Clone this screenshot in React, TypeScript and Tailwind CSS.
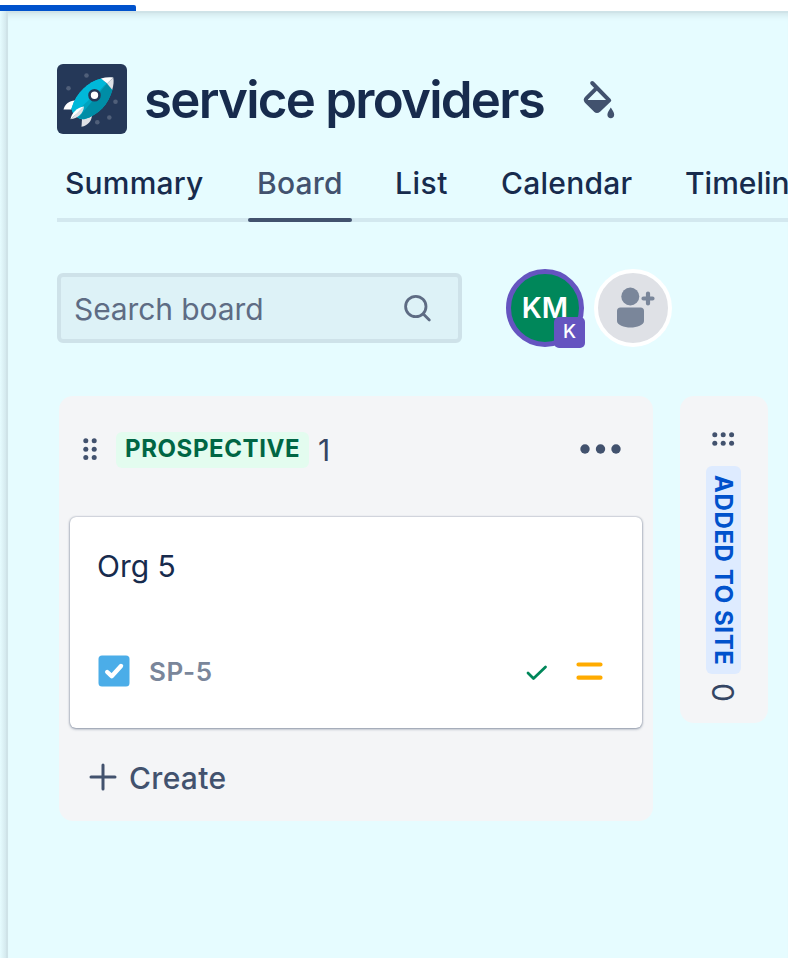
import React from "react";

function Rocket() {
  return (
    <svg viewBox="0 0 70 70" className="h-[70px] w-[70px] shrink-0">
      <rect width="70" height="70" rx="6" fill="#253858" />
      <g fill="#505F79">
        <circle cx="29.500" cy="11.500" r="2.300" />
        <circle cx="11.500" cy="24.300" r="2.300" />
        <circle cx="58.500" cy="37.700" r="2.300" />
        <circle cx="52.300" cy="53.500" r="2.300" />
        <circle cx="40.300" cy="58.200" r="2.300" />
      </g>
      <path d="M6.500 45.600C8 39.500 13 36 19 36.500L14.500 45.500Z" fill="#fff" />
      <path d="M25 54.500L35 51.500C34.500 57 31 61.500 24.500 62.800Z" fill="#DFE1E6" />
      <path d="M44.500 14.500C31 18 19.500 28 14.500 44.500C15.500 50.500 19 54 25 55.200L36 34Z" fill="#00B8D9" />
      <path d="M55.500 25.500C51.500 40 42 51 27 55.300C22 55.500 17.500 52 15.500 47.500L50 19.500Z" fill="#00A3BF" />
      <path d="M55.500 25.500C51.500 40 42 51 27 55.300L21.500 53.800L50 19.500Z" fill="#008DA6" />
      <path d="M44.500 14.500C31 18 19.500 28 14.500 44.500L16.500 50L50 19.500Z" fill="#00B8D9" />
      <path d="M56.300 13.500C52 13 48 13.300 44 14.500L50.200 19.600Z" fill="#fff" />
      <path d="M56.300 13.500C57 17.500 56.500 21.500 55.200 25.800L50 19.500Z" fill="#DFE1E6" />
      <path d="M27 42.500C20 43.500 14.500 49 13.500 55.300L20.300 49.300Z" fill="#fff" />
      <path d="M27 42.500C26.500 49.500 20.500 54.500 13.500 55.300L20.300 49Z" fill="#DFE1E6" />
      <circle cx="37.500" cy="31.300" r="5" fill="#fff" stroke="#253858" strokeWidth="2.600" />
    </svg>
  );
}

function PaintBucket() {
  return (
    <svg viewBox="0 0 36 44" className="mt-[4px] h-[44px] w-[36px] shrink-0">
      <path d="M12.200 4L29.200 21.300L18.700 31.200Q17 32.700 15.300 31.200L6.600 22.600Q5 20.800 6.600 19.200L16.600 9.200" fill="none" stroke="#42526E" strokeWidth="4" strokeLinecap="round" strokeLinejoin="round" />
      <path d="M6 21H28.500L18.700 31.800Q17 33 15.300 31.800Z" fill="#42526E" />
      <path d="M30.800 28.500C32.500 31.200 34.200 33.500 34.200 35.700C34.200 37.900 32.700 39.300 30.800 39.300S27.400 37.900 27.400 35.700C27.400 33.500 29.200 31.200 30.800 28.500Z" fill="#42526E" />
    </svg>
  );
}

function Grip({ vertical }: { vertical?: boolean }) {
  const cols = vertical ? [0, 1] : [0, 1, 2];
  const rows = vertical ? [0, 1, 2] : [0, 1];
  return (
    <svg viewBox={vertical ? "0 0 14 24" : "0 0 24 14"} className={vertical ? "h-[24px] w-[14px]" : "h-[14px] w-[24px]"}>
      {cols.map((c) => rows.map((r) => (
        <circle key={`${c}-${r}`} cx={2.8 + c * 8.4} cy={2.8 + r * 8.4} r="2.500" fill="#42526E" />
      )))}
    </svg>
  );
}

function Header() {
  return (
    <div className="flex h-[70px] items-center">
      <Rocket />
      <h1 className="mt-[2px] ml-[17px] w-[436px] text-[51px] leading-[72px] font-semibold tracking-[-1.750px] whitespace-nowrap text-[#172B4D]">service providers</h1>
      <PaintBucket />
    </div>
  );
}

function Tabs() {
  return (
    <nav className="mt-[14px] flex h-[74px] w-[900px] text-[30px] leading-[70px] font-medium whitespace-nowrap text-[#172B4D] shadow-[inset_0_-4px_0_#d3e8ef]">
      <span className="w-[191px] pl-[8px] tracking-[0.200px]">Summary</span>
      <span className="h-[74px] w-[104px] pl-[9px] tracking-[0.200px] text-[#42526E]">
        Board
        <i className="block h-[4px] w-[104px] -ml-[9px] rounded-[2px] bg-[#42526E]" />
      </span>
      <span className="w-[106px] pl-[43px] tracking-[0.500px]">List</span>
      <span className="w-[184px] pl-[43px] tracking-[0.250px]">Calendar</span>
      <span className="pl-[43px]">Timeline</span>
    </nav>
  );
}

function Toolbar() {
  return (
    <div className="mt-[46px] flex h-[80px] items-center">
      <div className="flex h-[70px] w-[405px] items-center rounded-[6px] border-4 border-[#cee2e9] bg-[#ddf2f7] pl-[13px] text-[30px] text-[#5E6C84]">
        <span className="mt-[2px] w-[326px] tracking-[-0.100px]">Search board</span>
        <svg viewBox="0 0 32 32" className="mt-[2px] h-[32px] w-[32px]" fill="none" stroke="#5E6C84" strokeWidth="2.800" strokeLinecap="round">
          <circle cx="15.800" cy="13.500" r="10.200" />
          <path d="M23.300 21L29.300 27" />
        </svg>
      </div>
      <div className="relative ml-[44px] flex h-[78px] w-[78px] items-center justify-center rounded-full border-[5px] border-[#6554C0] bg-[#00875A] text-[28.500px] font-semibold text-white">
        <span>KM</span>
        <span className="absolute top-[43px] left-[43px] flex h-[31px] w-[31px] items-center justify-center rounded-[5px] bg-[#6554C0] text-[19px] font-medium">K</span>
      </div>
      <div className="ml-[10px] flex h-[78px] w-[78px] items-center justify-center rounded-full border-4 border-white bg-[#dfe1e6]">
        <svg viewBox="0 0 70 70" className="h-[70px] w-[70px]" fill="#7A869A">
          <circle cx="32.300" cy="23.500" r="9" />
          <path d="M19 38Q19 34.500 22.500 34.500H42.500Q46 34.500 46 38V48C46 52 39 54.500 32.500 54.500S19 52 19 48Z" />
          <path d="M50 20.500V30.500M45.500 25.500H54.500" fill="none" stroke="#7A869A" strokeWidth="4.200" strokeLinecap="round" />
        </svg>
      </div>
    </div>
  );
}

function Card() {
  return (
    <article className="mx-[11px] h-[211px] rounded-[6px] bg-white px-[28px] pt-[25px] shadow-[0_1px_3px_rgba(9,30,66,0.4),0_0_2px_rgba(9,30,66,0.35)]">
      <p className="-ml-px h-[113px] text-[30px] leading-[48px] text-[#172B4D]">Org 5</p>
      <div className="flex h-[32px] items-center">
        <svg viewBox="0 0 32 32" className="h-[32px] w-[32px]">
          <rect x="0.500" y="0.500" width="31" height="31" rx="3.500" fill="#4BADE8" />
          <path d="M9.200 17L13.700 21.200L23 11" fill="none" stroke="#fff" strokeWidth="4.400" strokeLinecap="round" strokeLinejoin="round" />
        </svg>
        <span className="ml-[19px] flex-1 text-[26px] font-semibold tracking-[0.600px] text-[#7A869A]">SP-5</span>
        <svg viewBox="0 0 24 24" className="mr-[26px] h-[24px] w-[24px]" fill="none" stroke="#00875A" strokeWidth="2.800" strokeLinecap="round" strokeLinejoin="round">
          <path d="M3 14L8.500 19.500L20.500 8" />
        </svg>
        <svg viewBox="0 0 28 28" className="mr-[11px] h-[28px] w-[28px]" fill="none" stroke="#FFAB00" strokeWidth="4.200" strokeLinecap="round">
          <path d="M3.500 7.500H25.500M3.500 20.700H25.500" />
        </svg>
      </div>
    </article>
  );
}

function ProspectiveColumn() {
  return (
    <section className="h-[425px] w-[594px] rounded-[14px] bg-[#f4f5f7]">
      <div className="flex h-[121px] items-center pb-[14px] pl-[24px]">
        <Grip vertical />
        <span className="ml-[19px] h-[36px] w-[193px] rounded-[6px] bg-[#E3FCEF] pl-[9px] text-[24px] leading-[34px] font-bold tracking-[0.600px] text-[#006644]">PROSPECTIVE</span>
        <span className="mt-[2px] ml-[9px] w-[261px] text-[30px] text-[#344563]">1</span>
        <svg viewBox="0 0 42 12" className="mb-[2px] h-[12px] w-[42px]" fill="#42526E">
          <circle cx="6" cy="6" r="4.700" /><circle cx="21.500" cy="6" r="4.700" /><circle cx="37" cy="6" r="4.700" />
        </svg>
      </div>
      <Card />
      <div className="flex h-[93px] items-center pt-[7px] pl-[30px]">
        <svg viewBox="0 0 28 28" className="mb-[2px] h-[28px] w-[28px]" stroke="#42526E" strokeWidth="3" strokeLinecap="round">
          <path d="M14 2V26M2 14H26" />
        </svg>
        <span className="ml-[12px] text-[30px] font-medium tracking-[0.300px] text-[#42526E]">Create</span>
      </div>
    </section>
  );
}

function AddedColumn() {
  return (
    <section className="ml-[27px] flex h-[327px] w-[88px] flex-col items-center rounded-[14px] bg-[#f4f5f7] pt-[36px]">
      <Grip />
      <div className="mt-[20px] mr-px h-[208px] w-[35px] rounded-[6px] bg-[#DEEBFF] pt-[9px] text-[24px] leading-[35px] font-bold tracking-[0.600px] whitespace-nowrap text-[#0052CC] [writing-mode:vertical-rl]">ADDED TO SITE</div>
      <span className="mt-[9px] mr-[2px] text-[30px] leading-[36px] text-[#344563] [writing-mode:vertical-rl]">0</span>
    </section>
  );
}

export default function App() {
  return (
    <div className="flex h-[958px] w-[788px] flex-col overflow-hidden bg-[#E6FCFF] font-['Inter','Liberation_Sans',sans-serif]">
      <div className="h-[11px] shrink-0 bg-white pt-[5px]">
        <div className="h-[6px] w-[136px] rounded-tr-[2px] bg-[#0052CC]" />
      </div>
      <div className="flex min-h-0 flex-1">
        <aside className="w-[8px] shrink-0 border-r-2 border-[#cfe3e8] bg-linear-to-r from-[#E6FCFF] to-[#d4e9ee]" />
        <main className="min-w-0 flex-1 overflow-hidden pt-[53px] pl-[49px] shadow-[inset_0_2px_0_#cfe3e8,inset_0_9px_6px_-5px_#cfe3e8]">
          <Header />
          <Tabs />
          <Toolbar />
          <div className="mt-[48px] ml-[2px] flex items-start">
            <ProspectiveColumn />
            <AddedColumn />
          </div>
        </main>
      </div>
    </div>
  );
}
